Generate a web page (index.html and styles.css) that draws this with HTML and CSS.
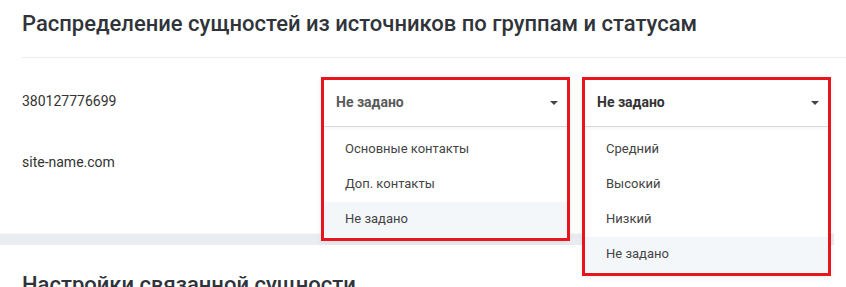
FILE: index.html
```html
<!DOCTYPE html>
<html lang="ru">
<head>
<meta charset="utf-8">
<title>Распределение</title>
<link rel="stylesheet" href="styles.css">
</head>
<body>
<div class="section">
  <h2 class="title">Распределение сущностей из источников по группам и статусам</h2>
  <div class="rule"></div>
  <div class="rows">
    <div class="row">
      <div class="label">380127776699</div>
      <div class="select">
        <div class="panel">
          <div class="head head-muted"><span>Не задано</span><span class="caret"></span></div>
          <ul class="menu">
            <li>Основные контакты</li>
            <li>Доп. контакты</li>
            <li class="active">Не задано</li>
          </ul>
        </div>
      </div>
      <div class="select">
        <div class="panel">
          <div class="head"><span>Не задано</span><span class="caret"></span></div>
          <ul class="menu">
            <li>Средний</li>
            <li>Высокий</li>
            <li>Низкий</li>
            <li class="active">Не задано</li>
          </ul>
        </div>
      </div>
    </div>
    <div class="row">
      <div class="label">site-name.com</div>
    </div>
  </div>
</div>
<div class="band"></div>
<div class="section section-next">
  <h2 class="title">Настройки связанной сущности</h2>
</div>
</body>
</html>
```

FILE: styles.css
```css
* { box-sizing: border-box; }
html, body { margin: 0; padding: 0; background: #fff; }
body {
  font-family: Roboto, "Noto Sans", "Liberation Sans", sans-serif;
  color: #333;
  overflow: hidden;
}
.section { padding: 12px 0 0 22px; }
.title {
  margin: 0;
  font-size: 22px;
  line-height: 24px;
  font-weight: 500;
  color: #30343a;
}
.rule { height: 1px; background: #ececec; margin-top: 21px; }
.rows {
  display: flex;
  flex-direction: column;
  gap: 11px;
  padding-top: 19px;
}
.row {
  display: flex;
  align-items: center;
  height: 50px;
}
.label {
  width: 299px;
  font-size: 14px;
  color: #333;
  padding-bottom: 2px;
}
.select {
  position: relative;
  width: 249px;
  height: 50px;
  margin-right: 12px;
}
.panel {
  position: absolute;
  top: 0;
  left: 0;
  width: 249px;
  border: 3px solid #e8141e;
  background: #fff;
  z-index: 2;
  box-shadow: 0 2px 6px rgba(0,0,0,0.06);
}
.head {
  height: 47px;
  border-bottom: 1px solid #d9d9d9;
  display: flex;
  align-items: center;
  justify-content: space-between;
  padding: 0 9px 2px 12px;
  font-size: 14px;
  font-weight: 700;
  color: #333;
}
.head-muted { color: #5a5a5a; }
.caret {
  width: 0;
  height: 0;
  border-left: 4px solid transparent;
  border-right: 4px solid transparent;
  border-top: 4px solid #444;
  margin-top: 2px;
}
.menu {
  list-style: none;
  margin: 0;
  padding: 5px 0 1px;
  box-shadow: inset 0 5px 4px -4px rgba(0,0,0,0.05);
}
.menu li {
  height: 35px;
  line-height: 33px;
  padding-left: 21px;
  font-size: 13px;
  color: #444;
}
.menu li.active { background: #f4f7fa; }
.band {
  margin-top: 45px;
  margin-right: 12px;
  height: 12px;
  background: #e9ecf0;
  box-shadow: inset 0 1px 1px rgba(255,255,255,0.6);
}
.section-next { padding-top: 28px; }
```
